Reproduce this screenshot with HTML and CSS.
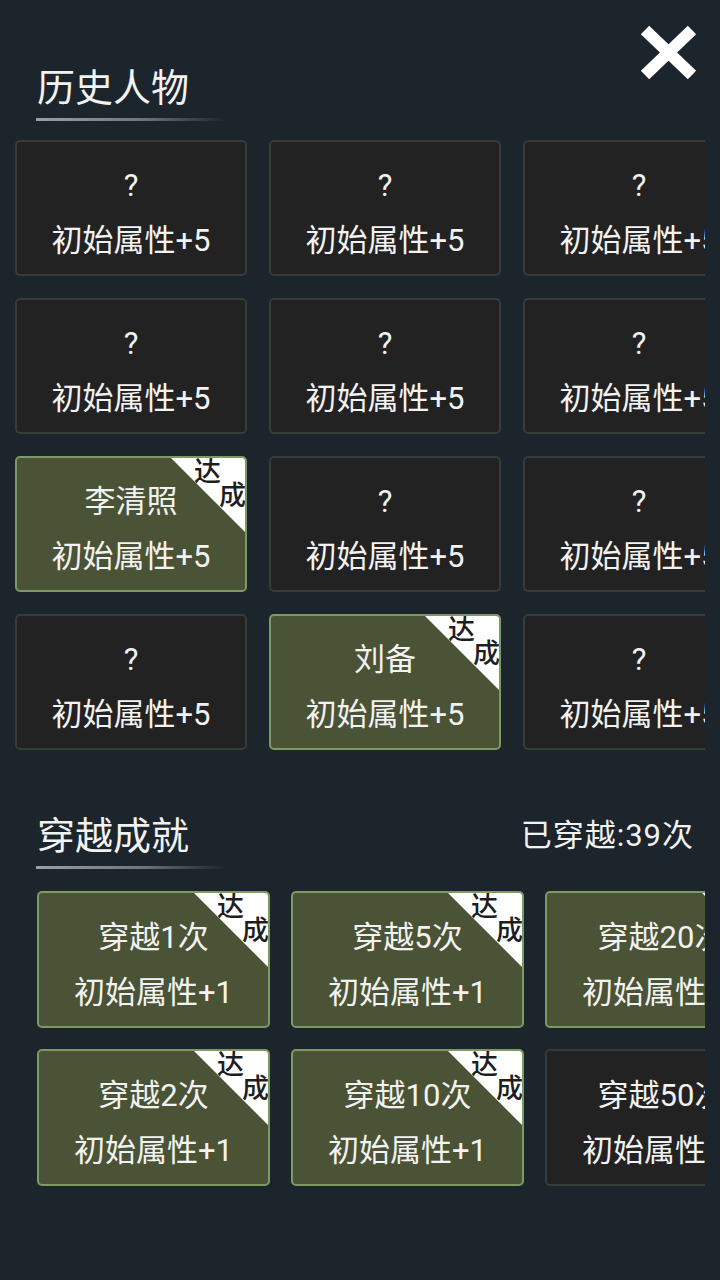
FILE: index.html
```html
<!DOCTYPE html>
<html lang="zh-CN">
<head>
    <meta charset="UTF-8">
    <meta name="viewport" content="width=device-width, initial-scale=1.0">
    <title>历史人物</title>
    <link rel="stylesheet" href="styles.css">
</head>
<body>
    <div class="page">
        <button class="close-btn" aria-label="关闭">
            <svg viewBox="0 0 57 55" width="57" height="55">
                <line x1="5" y1="5" x2="52" y2="50" stroke="#fff" stroke-width="12"/>
                <line x1="52" y1="5" x2="5" y2="50" stroke="#fff" stroke-width="12"/>
            </svg>
        </button>

        <section class="section figures">
            <div class="section-head">
                <h2 class="section-title">历史人物</h2>
            </div>
            <div class="grid-view">
                <div class="grid">
                    <div class="card"><p class="card-name">?</p><p class="card-bonus">初始属性+5</p></div>
                    <div class="card"><p class="card-name">?</p><p class="card-bonus">初始属性+5</p></div>
                    <div class="card"><p class="card-name">?</p><p class="card-bonus">初始属性+5</p></div>

                    <div class="card"><p class="card-name">?</p><p class="card-bonus">初始属性+5</p></div>
                    <div class="card"><p class="card-name">?</p><p class="card-bonus">初始属性+5</p></div>
                    <div class="card"><p class="card-name">?</p><p class="card-bonus">初始属性+5</p></div>

                    <div class="card done">
                        <p class="card-name">李清照</p><p class="card-bonus">初始属性+5</p>
                        <span class="badge"><i>达</i><i>成</i></span>
                    </div>
                    <div class="card"><p class="card-name">?</p><p class="card-bonus">初始属性+5</p></div>
                    <div class="card"><p class="card-name">?</p><p class="card-bonus">初始属性+5</p></div>

                    <div class="card"><p class="card-name">?</p><p class="card-bonus">初始属性+5</p></div>
                    <div class="card done">
                        <p class="card-name">刘备</p><p class="card-bonus">初始属性+5</p>
                        <span class="badge"><i>达</i><i>成</i></span>
                    </div>
                    <div class="card"><p class="card-name">?</p><p class="card-bonus">初始属性+5</p></div>
                </div>
            </div>
        </section>

        <section class="section achievements">
            <div class="section-head">
                <h2 class="section-title">穿越成就</h2>
                <p class="travel-count">已穿越:39次</p>
            </div>
            <div class="grid-view">
                <div class="grid">
                    <div class="card done">
                        <p class="card-name">穿越1次</p><p class="card-bonus">初始属性+1</p>
                        <span class="badge"><i>达</i><i>成</i></span>
                    </div>
                    <div class="card done">
                        <p class="card-name">穿越5次</p><p class="card-bonus">初始属性+1</p>
                        <span class="badge"><i>达</i><i>成</i></span>
                    </div>
                    <div class="card done">
                        <p class="card-name">穿越20次</p><p class="card-bonus">初始属性+1</p>
                        <span class="badge"><i>达</i><i>成</i></span>
                    </div>

                    <div class="card done">
                        <p class="card-name">穿越2次</p><p class="card-bonus">初始属性+1</p>
                        <span class="badge"><i>达</i><i>成</i></span>
                    </div>
                    <div class="card done">
                        <p class="card-name">穿越10次</p><p class="card-bonus">初始属性+1</p>
                        <span class="badge"><i>达</i><i>成</i></span>
                    </div>
                    <div class="card"><p class="card-name">穿越50次</p><p class="card-bonus">初始属性+1</p></div>
                </div>
            </div>
        </section>
    </div>
</body>
</html>
```

FILE: styles.css
```css
* {
    box-sizing: border-box;
    margin: 0;
    padding: 0;
}

body {
    background-color: #1c242c;
    font-family: Roboto, "Noto Sans CJK SC", "Noto Sans", sans-serif;
    color: #f2f2f2;
}

.page {
    position: relative;
    width: 720px;
    min-height: 1280px;
    padding-top: 66px;
}

.close-btn {
    position: absolute;
    top: 25px;
    left: 640px;
    width: 57px;
    height: 55px;
    background: none;
    border: none;
    cursor: pointer;
}

.close-btn svg {
    display: block;
}

.section-head {
    display: flex;
    align-items: center;
    justify-content: space-between;
    padding: 0 26px 0 37px;
}

.section-title {
    font-size: 38px;
    font-weight: 400;
    line-height: 44px;
    position: relative;
}

.section-title::after {
    content: "";
    position: absolute;
    left: -1px;
    bottom: -11px;
    width: 190px;
    height: 3px;
    background: linear-gradient(to right, #9aa0a6 0%, #6f767d 55%, rgba(111, 118, 125, 0) 100%);
}

.travel-count {
    font-size: 31px;
    line-height: 44px;
    letter-spacing: 1px;
}

.grid-view {
    overflow: hidden;
}

.grid {
    display: grid;
    grid-template-columns: repeat(3, 232px);
    gap: 22px;
}

.figures .grid-view {
    width: 690px;
    margin: 30px 0 0 15px;
}

.achievements {
    margin-top: 64px;
}

.achievements .grid-view {
    width: 668px;
    margin: 33px 0 0 37px;
}

.achievements .grid {
    grid-template-columns: repeat(3, 233px);
    gap: 21px;
}

.card {
    position: relative;
    height: 136px;
    display: flex;
    flex-direction: column;
    align-items: center;
    justify-content: center;
    padding-top: 10px;
    background-color: #222222;
    border: 2px solid #363c38;
    border-radius: 5px;
    overflow: hidden;
    font-size: 31px;
    line-height: 55px;
    white-space: nowrap;
}

.achievements .card {
    height: 137px;
}

.card.done {
    background-color: #4a5335;
    border-color: #7d9964;
}

.badge {
    position: absolute;
    top: -2px;
    right: -2px;
    width: 78px;
    height: 78px;
    background-color: #fff;
    clip-path: polygon(0 0, 100% 0, 100% 100%);
    color: #1e1e1e;
    font-family: "Noto Sans CJK SC", sans-serif;
    font-size: 27px;
    font-weight: 500;
    line-height: 27px;
}

.badge i {
    position: absolute;
    font-style: normal;
}

.badge i:first-child {
    top: 0;
    left: 25px;
}

.badge i:last-child {
    top: 24px;
    left: 50px;
}
```
